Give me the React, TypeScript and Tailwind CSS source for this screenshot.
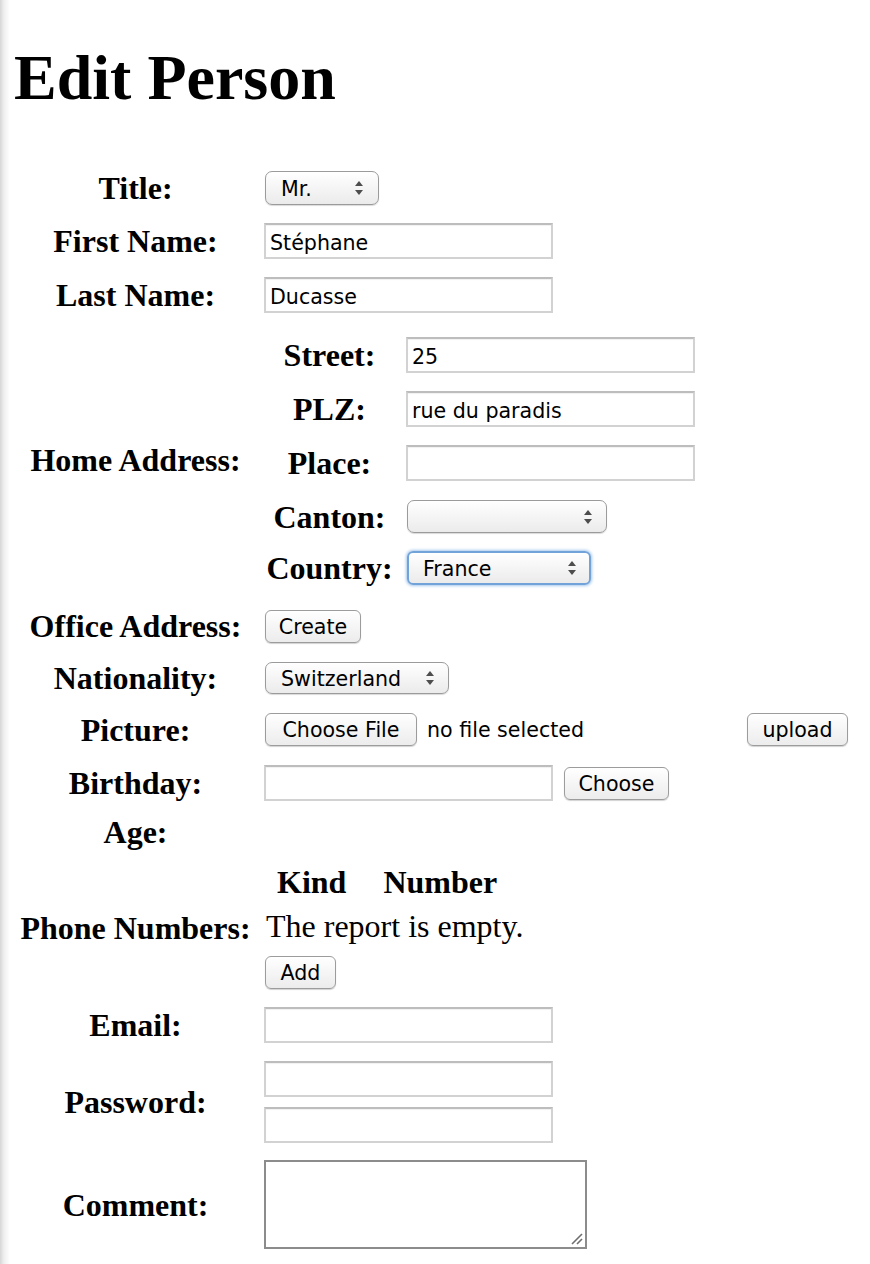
import React from "react";

function Arrows() {
  return (
    <svg width="8" height="14" viewBox="0 0 8 14" className="shrink-0">
      <polygon points="0,5 4,0 8,5" fill="#4d4d4d" />
      <polygon points="0,9 8,9 4,14" fill="#4d4d4d" />
    </svg>
  );
}

const ctl = "font-['DejaVu_Sans',sans-serif] text-[20.6px] text-black";
const inputCls =
  "w-[289px] h-[36px] border-2 border-[#d2d2d2] border-t-[#bdbdbd] bg-white px-[4px] pt-[3px] outline-none shadow-[inset_0_1px_1px_rgba(0,0,0,0.06)] " +
  ctl;
const btnCls =
  "h-[33px] rounded-[6px] border border-[#9c9c9c] bg-linear-to-b from-white to-[#ececec] shadow-[0_1px_1px_rgba(0,0,0,0.18)] flex items-center justify-center pt-[2px] leading-none " +
  ctl;

function Label({ children }: { children: React.ReactNode }) {
  return (
    <div className="w-[247px] shrink-0 text-center text-[32px] font-bold leading-none">
      {children}
    </div>
  );
}

function SubLabel({ children }: { children: React.ReactNode }) {
  return (
    <div className="w-[131px] shrink-0 text-center text-[32px] font-bold leading-none">
      {children}
    </div>
  );
}

export default function App() {
  return (
    <div className="min-h-screen bg-[linear-gradient(to_right,#d6d6d6_0px,#efefef_4px,#ffffff_10px)] font-['Liberation_Serif',serif] text-black">
      <h1 className="pl-[14px] pt-[46px] text-[64px] leading-[64px] font-bold">Edit Person</h1>
      <div className="mt-[52px] pl-[12px] flex flex-col">
        {/* Title */}
        <div className="flex items-center h-[52px]">
          <Label>Title:</Label>
          <div className="ml-[6px]">
            <div className={"w-[114px] h-[34px] rounded-[7px] border border-[#9b9b9b] bg-linear-to-b from-white to-[#ebebeb] shadow-[0_1px_1px_rgba(0,0,0,0.15)] flex items-center justify-between pl-[15px] pr-[15px] leading-none " + ctl}>
              <span className="pt-[2px]">Mr.</span>
              <Arrows />
            </div>
          </div>
        </div>
        {/* First Name */}
        <div className="flex items-center h-[54px]">
          <Label>First Name:</Label>
          <div className="ml-[5px]">
            <input className={inputCls} defaultValue="Stéphane" />
          </div>
        </div>
        {/* Last Name */}
        <div className="flex items-center h-[54px]">
          <Label>Last Name:</Label>
          <div className="ml-[5px]">
            <input className={inputCls} defaultValue="Ducasse" />
          </div>
        </div>
        {/* Home Address */}
        <div className="flex items-center h-[275px]">
          <Label>Home Address:</Label>
          <div className="ml-[5px] flex flex-col pt-[6px] pb-[4px]">
            <div className="flex items-center h-[54px]">
              <SubLabel>Street:</SubLabel>
              <div className="ml-[11px]">
                <input className={inputCls} defaultValue="25" />
              </div>
            </div>
            <div className="flex items-center h-[54px]">
              <SubLabel>PLZ:</SubLabel>
              <div className="ml-[11px]">
                <input className={inputCls} defaultValue="rue du paradis" />
              </div>
            </div>
            <div className="flex items-center h-[54px]">
              <SubLabel>Place:</SubLabel>
              <div className="ml-[11px]">
                <input className={inputCls} defaultValue="" />
              </div>
            </div>
            <div className="flex items-center h-[53px]">
              <SubLabel>Canton:</SubLabel>
              <div className="ml-[12px]">
                <div className={"w-[200px] h-[33px] rounded-[7px] border border-[#9b9b9b] bg-linear-to-b from-white to-[#ebebeb] shadow-[0_1px_1px_rgba(0,0,0,0.15)] flex items-center justify-end pr-[14px] leading-none " + ctl}>
                  <Arrows />
                </div>
              </div>
            </div>
            <div className="flex items-center h-[50px]">
              <SubLabel>Country:</SubLabel>
              <div className="ml-[12px]">
                <div className={"w-[184px] h-[34px] rounded-[6px] border-2 border-[#72a3d8] bg-linear-to-b from-white to-[#ebebeb] shadow-[0_0_3px_1px_#a6c8ee] flex items-center justify-between pl-[14px] pr-[13px] leading-none " + ctl}>
                  <span className="pt-[2px]">France</span>
                  <Arrows />
                </div>
              </div>
            </div>
          </div>
        </div>
        {/* Office Address */}
        <div className="flex items-center h-[58px]">
          <Label>Office Address:</Label>
          <div className="ml-[6px]">
            <div className={"w-[96px] " + btnCls}>Create</div>
          </div>
        </div>
        {/* Nationality */}
        <div className="flex items-center h-[46px]">
          <Label>Nationality:</Label>
          <div className="ml-[6px]">
            <div className={"w-[184px] h-[32px] rounded-[7px] border border-[#9b9b9b] bg-linear-to-b from-white to-[#ebebeb] shadow-[0_1px_1px_rgba(0,0,0,0.15)] flex items-center justify-between pl-[15px] pr-[14px] leading-none " + ctl}>
              <span className="pt-[2px]">Switzerland</span>
              <Arrows />
            </div>
          </div>
        </div>
        {/* Picture */}
        <div className="flex items-center h-[57px]">
          <Label>Picture:</Label>
          <div className="ml-[6px] flex items-center">
            <div className={"w-[152px] " + btnCls}>Choose File</div>
            <span className={"ml-[10px] w-[320px] pt-[2px] leading-none " + ctl}>no file selected</span>
            <div className={"w-[101px] " + btnCls}>upload</div>
          </div>
        </div>
        {/* Birthday */}
        <div className="flex items-center h-[50px]">
          <Label>Birthday:</Label>
          <div className="ml-[5px] flex items-center">
            <input className={inputCls} defaultValue="" />
            <div className={"ml-[11px] w-[105px] " + btnCls}>Choose</div>
          </div>
        </div>
        {/* Age */}
        <div className="flex items-center h-[48px]">
          <Label>Age:</Label>
        </div>
        {/* Phone Numbers */}
        <div className="flex items-center h-[144px]">
          <Label>Phone Numbers:</Label>
          <div className="ml-[5px] flex flex-col">
            <div className="flex items-center h-[52px] pl-[13px] text-[32px] font-bold leading-none">
              <span>Kind</span>
              <span className="ml-[37px]">Number</span>
            </div>
            <div className="flex items-center h-[36px] pl-[2px] text-[32px] leading-none">
              The report is empty.
            </div>
            <div className="flex items-center h-[56px]">
              <div className={"ml-[1px] w-[71px] " + btnCls}>Add</div>
            </div>
          </div>
        </div>
        {/* Email */}
        <div className="flex items-center h-[50px]">
          <Label>Email:</Label>
          <div className="ml-[5px]">
            <input className={inputCls} defaultValue="" />
          </div>
        </div>
        {/* Password */}
        <div className="flex items-center h-[104px]">
          <Label>Password:</Label>
          <div className="ml-[5px] flex flex-col gap-[10px]">
            <input type="password" className={inputCls} defaultValue="" />
            <input type="password" className={inputCls} defaultValue="" />
          </div>
        </div>
        {/* Comment */}
        <div className="flex items-center h-[101px]">
          <Label>Comment:</Label>
          <div className="ml-[5px] relative">
            <textarea className="block w-[323px] h-[89px] border-2 border-[#8c8c8c] bg-white resize-none outline-none" />
            <svg width="12" height="12" viewBox="0 0 12 12" className="absolute right-[4px] bottom-[4px]">
              <line x1="1" y1="11" x2="11" y2="1" stroke="#6e6e6e" strokeWidth="1.6" />
              <line x1="6" y1="11" x2="11" y2="6" stroke="#6e6e6e" strokeWidth="1.6" />
            </svg>
          </div>
        </div>
      </div>
    </div>
  );
}
